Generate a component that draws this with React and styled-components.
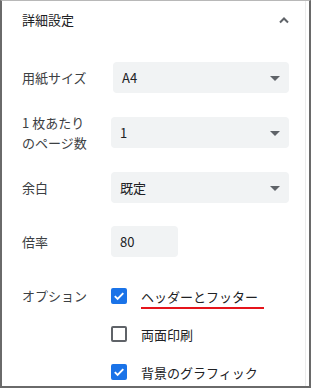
import React, { useState } from "react";
import styled, { createGlobalStyle } from "styled-components";

const GlobalStyle = createGlobalStyle`
  html, body {
    margin: 0;
    padding: 0;
    background: #ffffff;
  }
  body {
    font-family: "Noto Sans CJK JP", "Noto Sans", sans-serif;
    color: #202124;
  }
`;

const Frame = styled.div`
  box-sizing: border-box;
  width: 311px;
  height: 388px;
  border-top: 1px solid #b8b8b8;
  border-left: 2px solid #6a6a6a;
  border-right: 2px solid #6a6a6a;
  border-bottom: 2px solid #6a6a6a;
  overflow: hidden;
  background: #fff;
`;

const Panel = styled.div`
  box-sizing: border-box;
  height: 100%;
  margin-right: 3px;
  border-right: 1px solid #ececec;
  padding-left: 20px;
  display: flex;
  flex-direction: column;

  & > * {
    flex-shrink: 0;
  }
`;

const Header = styled.div`
  height: 37px;
  display: flex;
  align-items: center;
  justify-content: space-between;
  padding-right: 15px;
  font-size: 13px;
  color: #202124;
  margin-bottom: 24px;
`;

const Field = styled.div`
  display: grid;
  grid-template-columns: 89px 178px;
  align-items: center;
  height: 31px;
  margin-bottom: ${(p) => p.$gap ?? 24}px;
`;

const Label = styled.div`
  font-size: 13px;
  line-height: 20px;
  color: #3c4043;
  margin: ${(p) => (p.$tall ? "-5px 0" : "0")};
`;

const SelectBox = styled.div`
  box-sizing: border-box;
  height: 31px;
  width: ${(p) => p.$width || 178}px;
  margin-left: ${(p) => p.$offset || 0}px;
  background: #f1f3f4;
  border-radius: 4px;
  display: flex;
  align-items: center;
  justify-content: space-between;
  padding: 0 9px 0 9px;
  font-size: 13px;
  color: #202124;
`;

const Arrow = styled.span`
  width: 0;
  height: 0;
  border-left: 5px solid transparent;
  border-right: 5px solid transparent;
  border-top: 5px solid #5f6368;
  margin-top: 1px;
`;

const NumberBox = styled(SelectBox)`
  width: 67px;
`;

const Options = styled.div`
  display: grid;
  grid-template-columns: 89px 1fr;
  margin-top: -4px;
`;

const OptionLabel = styled(Label)`
  height: 38px;
  display: flex;
  align-items: center;
`;

const OptionList = styled.div`
  display: flex;
  flex-direction: column;
`;

const OptionRow = styled.label`
  height: 38px;
  display: flex;
  align-items: center;
  gap: 14px;
  font-size: 13px;
  color: #202124;
  cursor: pointer;
`;

const Box = styled.span`
  box-sizing: border-box;
  width: 16px;
  height: 16px;
  border-radius: 2px;
  display: flex;
  align-items: center;
  justify-content: center;
  background: ${(p) => (p.$checked ? "#1a73e8" : "#fff")};
  border: 2px solid ${(p) => (p.$checked ? "#1a73e8" : "#5f6368")};
`;

const Marked = styled.span`
  position: relative;
  &::after {
    content: "";
    position: absolute;
    left: 0;
    right: -6px;
    bottom: -3px;
    height: 2px;
    background: #e5141b;
  }
`;

const Check = () => (
  <svg width="12" height="12" viewBox="0 0 12 12">
    <path d="M1.8 6.2 L4.6 9 L10.3 3.1" fill="none" stroke="#fff" strokeWidth="1.9" />
  </svg>
);

const ChevronUp = () => (
  <svg width="12" height="8" viewBox="0 0 12 8">
    <path d="M2 6.5 L6 2.5 L10 6.5" fill="none" stroke="#5f6368" strokeWidth="2" />
  </svg>
);

const App = () => {
  const [opts, setOpts] = useState([true, false, true]);
  const items = ["ヘッダーとフッター", "両面印刷", "背景のグラフィック"];

  return (
    <>
      <GlobalStyle />
      <Frame>
        <Panel>
          <Header>
            <span>詳細設定</span>
            <ChevronUp />
          </Header>
          <Field>
            <Label>用紙サイズ</Label>
            <SelectBox $offset={2} $width={176}>
              <span>A4</span>
              <Arrow />
            </SelectBox>
          </Field>
          <Field>
            <Label $tall>
              1 枚あたり
              <br />
              のページ数
            </Label>
            <SelectBox>
              <span>1</span>
              <Arrow />
            </SelectBox>
          </Field>
          <Field $gap={23}>
            <Label>余白</Label>
            <SelectBox>
              <span>既定</span>
              <Arrow />
            </SelectBox>
          </Field>
          <Field>
            <Label>倍率</Label>
            <NumberBox>80</NumberBox>
          </Field>
          <Options>
            <OptionLabel>オプション</OptionLabel>
            <OptionList>
              {items.map((text, i) => (
                <OptionRow
                  key={text}
                  onClick={() =>
                    setOpts(opts.map((v, j) => (j === i ? !v : v)))
                  }
                >
                  <Box $checked={opts[i]}>{opts[i] && <Check />}</Box>
                  {i === 0 ? <Marked>{text}</Marked> : <span>{text}</span>}
                </OptionRow>
              ))}
            </OptionList>
          </Options>
        </Panel>
      </Frame>
    </>
  );
};

export default App;
